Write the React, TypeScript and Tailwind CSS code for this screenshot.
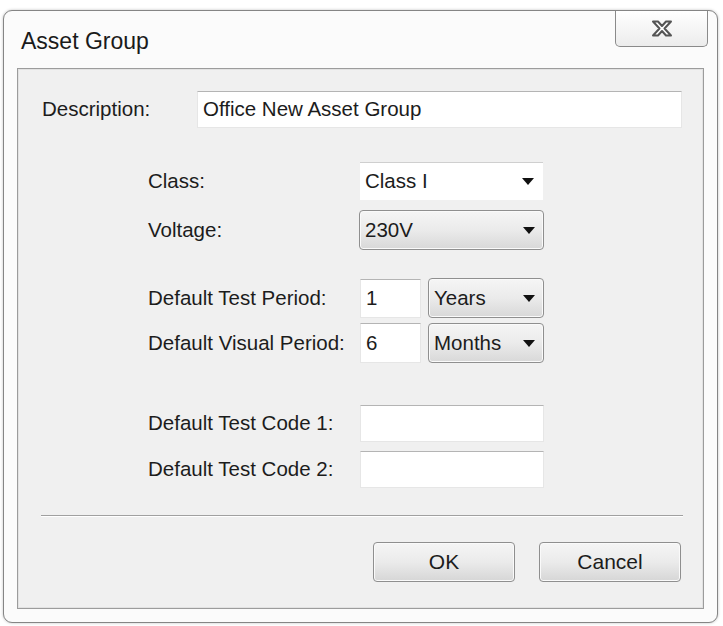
import React from "react";

const font = { fontFamily: '"Liberation Sans", Arial, sans-serif' };

const Arrow = () => (
  <svg width="12" height="7" viewBox="0 0 12 7" className="shrink-0">
    <polygon points="0,0 12,0 6,7" fill="#111" />
  </svg>
);

const CloseGlyph = () => (
  <svg width="22" height="17" viewBox="0 0 22 17">
    <polygon
      points="2,1.5 7,1.5 11,6 15,1.5 20,1.5 13.5,8.5 20,15.5 15,15.5 11,11 7,15.5 2,15.5 8.5,8.5"
      fill="#ffffff"
      stroke="#555555"
      strokeWidth="2"
      strokeLinejoin="round"
    />
  </svg>
);

const TextBox = ({ value, className }: { value?: string; className: string }) => (
  <div
    className={`flex items-center bg-white border border-[#e6e6e6] border-t-[#b4b4b4] pl-[5px] text-[20.5px] text-[#1c1c1c] ${className}`}
  >
    {value}
  </div>
);

const Combo = ({ value, className }: { value: string; className: string }) => (
  <div
    className={`flex items-center justify-between rounded-[4px] border border-[#8f8f8f] bg-linear-to-b from-[#f5f5f5] via-[#ebebeb] to-[#d8d8d8] pl-[5px] pr-[8px] text-[20.5px] text-[#1c1c1c] shadow-[inset_0_0_0_1px_#fafafa] ${className}`}
  >
    <span>{value}</span>
    <Arrow />
  </div>
);

const Button = ({ label }: { label: string }) => (
  <div className="flex h-[40px] w-[142px] items-center justify-center rounded-[4px] border border-[#8f8f8f] bg-linear-to-b from-[#f5f5f5] via-[#ebebeb] to-[#d6d6d6] text-[21px] text-[#1c1c1c] shadow-[inset_0_0_0_1px_#fafafa]">
    {label}
  </div>
);

export default function App() {
  return (
    <div className="min-h-screen w-[723px] bg-white pl-[3px] pt-[10px]" style={font}>
      <div className="flex h-[613px] w-[715px] flex-col rounded-[9px] border border-[#858585] bg-[#fbfbfb] shadow-[0_0_3px_rgba(0,0,0,0.25)]">
        {/* title bar */}
        <div className="flex h-[57px] items-start justify-between pl-[17px] pr-[9px]">
          <div className="pt-[16px] text-[23px] leading-[28px] text-[#1a1a1a]">Asset Group</div>
          <div className="flex h-[36px] w-[93px] items-center justify-center rounded-b-[5px] border border-t-0 border-[#8a8a8a] bg-linear-to-b from-[#ffffff] to-[#ececec]">
            <CloseGlyph />
          </div>
        </div>

        {/* client area */}
        <div className="mx-[13px] mb-[13px] flex flex-1 flex-col border border-[#9c9c9c] bg-[#f0f0f0] shadow-[inset_0_0_0_1px_#e2e2e2] text-[#1c1c1c]">
          {/* description */}
          <div className="mt-[22px] flex h-[37px] items-center pl-[24px]">
            <div className="w-[155px] text-[20.5px]">Description:</div>
            <TextBox value="Office New Asset Group" className="h-[37px] w-[485px]" />
          </div>

          {/* class */}
          <div className="mt-[34px] flex h-[38px] items-center pl-[130px]">
            <div className="w-[212px] text-[20.5px]">Class:</div>
            <div className="flex h-[38px] w-[183px] items-center justify-between border-t border-[#cfcfcf] bg-white pl-[5px] pr-[9px] text-[20.5px]">
              <span>Class I</span>
              <Arrow />
            </div>
          </div>

          {/* voltage */}
          <div className="mt-[10px] flex h-[40px] items-center pl-[130px]">
            <div className="w-[211px] text-[20.5px]">Voltage:</div>
            <Combo value="230V" className="h-[40px] w-[185px]" />
          </div>

          {/* test period */}
          <div className="mt-[28px] flex h-[40px] items-center pl-[130px]">
            <div className="w-[212px] text-[20.5px]">Default Test Period:</div>
            <TextBox value="1" className="h-[39px] w-[61px]" />
            <Combo value="Years" className="ml-[7px] h-[40px] w-[116px]" />
          </div>

          {/* visual period */}
          <div className="mt-[5px] flex h-[40px] items-center pl-[130px]">
            <div className="w-[212px] text-[20.5px]">Default Visual Period:</div>
            <TextBox value="6" className="h-[40px] w-[61px]" />
            <Combo value="Months" className="ml-[7px] h-[40px] w-[116px]" />
          </div>

          {/* test codes */}
          <div className="mt-[42px] flex h-[37px] items-center pl-[130px]">
            <div className="w-[212px] text-[20.5px]">Default Test Code 1:</div>
            <TextBox className="h-[37px] w-[184px]" />
          </div>
          <div className="mt-[9px] flex h-[37px] items-center pl-[130px]">
            <div className="w-[212px] text-[20.5px]">Default Test Code 2:</div>
            <TextBox className="h-[37px] w-[184px]" />
          </div>

          {/* separator */}
          <div className="ml-[23px] mt-[27px] h-[2px] w-[642px] border-t border-b border-t-[#a0a0a0] border-b-white" />

          {/* buttons */}
          <div className="mt-[25px] flex justify-end gap-[24px] pr-[22px]">
            <Button label="OK" />
            <Button label="Cancel" />
          </div>
        </div>
      </div>
    </div>
  );
}
